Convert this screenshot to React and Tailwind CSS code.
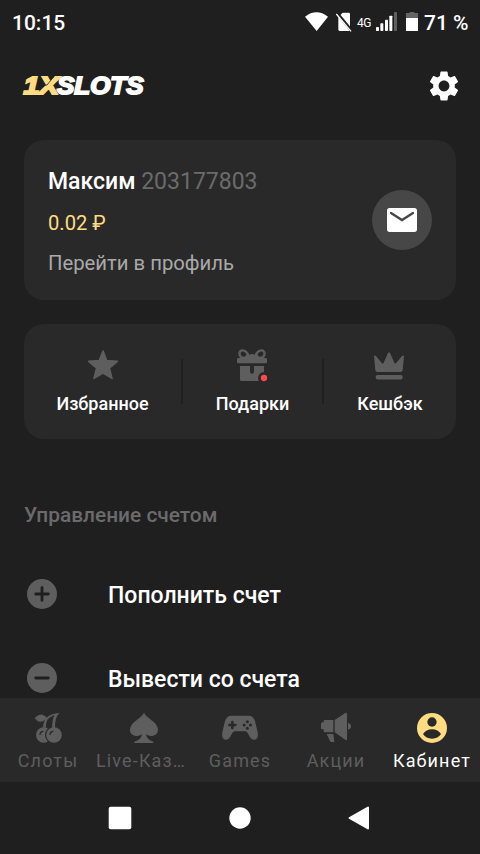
import React from "react";
import { MdSettings } from "react-icons/md";

const GREY = "#5e5e5e";
const PANEL = "#292929";

function StatusBar() {
  return (
    <div className="flex h-[46px] shrink-0 items-center justify-between pl-3 text-[21px] font-medium text-white">
      <span className="mt-0.5 whitespace-nowrap">10:15</span>
      <div className="flex w-[175px] items-center">
        <svg width="24" height="21" viewBox="45 33 72 63" className="mb-[3px] shrink-0">
          <path d="M45 50Q79 24 114 50L80 93Z" fill="#fff" />
        </svg>
        <svg width="18" height="21" viewBox="135 33 54 63" className="mb-[3px] ml-1.5 shrink-0">
          <path d="M145 52L157 39Q158 38 160 38H176Q180 38 180 42V88Q180 93 176 93H149Q145 93 145 88Z" fill="#fff" />
          <path d="M141 39L187 95" stroke="#1f1f1f" strokeWidth="9" />
          <path d="M139 42L183 94" stroke="#fff" strokeWidth="4" />
        </svg>
        <span className="ml-1 w-[14px] shrink-0 text-[12px] font-normal tracking-[-0.4px]">4G</span>
        <svg width="24" height="21" viewBox="255 33 72 63" className="mb-[3px] ml-1 shrink-0">
          <g fill="#fff">
            <rect x="258" y="81" width="9" height="12" rx="2" />
            <rect x="271" y="70" width="9" height="23" rx="2" />
            <rect x="285" y="59" width="9" height="34" rx="2" />
            <rect x="298" y="47" width="9" height="46" rx="2" />
            <rect x="312" y="36" width="9" height="57" rx="2" fill="#5f5f5f" />
          </g>
        </svg>
        <svg width="14" height="21" viewBox="345 33 42 63" className="mb-[3px] ml-1.5 shrink-0">
          <path d="M348 39H359V36H373V39H384V56H348Z" fill="#656565" />
          <rect x="348" y="54" width="36" height="39" fill="#fff" />
        </svg>
        <span className="mt-0.5 ml-[5px] whitespace-nowrap">71 %</span>
      </div>
    </div>
  );
}

function Logo() {
  return (
    <svg width="132" height="40" viewBox="18 66 132 40" fontFamily="'Liberation Sans', sans-serif" fontWeight="700" fontStyle="italic" fontSize="23.5">
      <text x="23.500" y="94.300" textLength="35" lengthAdjust="spacingAndGlyphs" fill="#ffdc82" stroke="#ffdc82" strokeWidth="1.9">1X</text>
      <path d="M38 86.500L47 85L53.500 77" stroke="#1f1f1f" strokeWidth="0.8" fill="none" />
      <text x="57" y="94.300" textLength="86.5" lengthAdjust="spacingAndGlyphs" fill="#fff" stroke="#fff" strokeWidth="1.8">SLOTS</text>
    </svg>
  );
}

function ProfileCard() {
  return (
    <section className="mx-6 mt-3.5 flex h-40 shrink-0 items-center justify-between rounded-[20px] bg-[#292929] px-6">
      <div className="mt-1 flex flex-col whitespace-nowrap">
        <div className="h-[42px] text-[23px] leading-[42px]">
          <span className="font-medium text-white">Максим</span>{" "}
          <span className="text-[#6b6b6b]">203177803</span>
        </div>
        <div className="h-10 text-[20.2px] leading-[40px] text-[#ffdc82]">0.02 ₽</div>
        <div className="h-10 text-[20.3px] leading-[40px] text-[#a9a9a9]">Перейти в профиль</div>
      </div>
      <svg width="60" height="60" viewBox="66 180 180 180">
        <circle cx="156" cy="270" r="90" fill="#474747" />
        <rect x="111" y="234" width="90" height="72" rx="8" fill="#fff" />
        <path d="M123 249L156 270L189 249" fill="none" stroke="#474747" strokeWidth="7" strokeLinecap="round" />
      </svg>
    </section>
  );
}

const Star = () => (
  <svg width="33" height="36" viewBox="198 81 99 108" fill={GREY} stroke={GREY} strokeWidth="5" strokeLinejoin="round">
    <path d="M249 93L260 122L292 124L268 144L276 175L249 159L222 175L230 144L206 124L238 122Z" />
  </svg>
);

const Gift = () => (
  <svg width="33" height="36" viewBox="18 81 99 108">
    <g fill="none" stroke={GREY} strokeWidth="7">
      <path d="M58 116C56 98 43 88 33 92C24 98 29 114 41 114C49 114 52 108 53 102" />
      <path d="M74 116C76 98 89 88 99 92C108 98 103 114 91 114C83 114 80 108 79 102" />
    </g>
    <rect x="21" y="114" width="90" height="16" rx="4" fill={GREY} />
    <path d="M55 116V107Q58 102 66 102Q74 102 77 107V116Z" fill={GREY} />
    <path d="M30 138H60V155Q60 161 66 161Q72 161 72 155V138H102V183H34Q30 183 30 179Z" fill={GREY} />
    <circle cx="102" cy="174" r="18" fill={PANEL} />
    <circle cx="102" cy="174" r="9.5" fill="#ff4949" />
  </svg>
);

const Crown = () => (
  <svg width="34" height="36" viewBox="429 81 102 108" fill={GREY}>
    <path d="M432 109Q433 104 438 108L456 130Q459 132 461 128L474 99Q477 94 480 99L493 128Q495 132 498 130L516 108Q521 104 522 109L518 151Q517 156 512 156H442Q437 156 436 151Z" />
    <rect x="437" y="165" width="81" height="13.5" rx="6" />
  </svg>
);

function Shortcut({ width, icon, label }) {
  return (
    <div className={`flex flex-col items-center pt-[23px] ${width}`}>
      {icon}
      <span className="mt-[11px] whitespace-nowrap text-[18px] leading-5 font-medium text-white">{label}</span>
    </div>
  );
}

const Divider = () => <div className="mt-[35px] h-[45px] w-0.5 bg-[#1f1f1f]" />;

function Shortcuts() {
  return (
    <section className="mx-6 mt-6 flex h-[115px] shrink-0 rounded-[20px] bg-[#292929]">
      <Shortcut width="w-[157px]" icon={<Star />} label="Избранное" />
      <Divider />
      <Shortcut width="w-[139px]" icon={<Gift />} label="Подарки" />
      <Divider />
      <Shortcut width="w-[132px]" icon={<Crown />} label="Кешбэк" />
    </section>
  );
}

function AccountRow({ label, plus }) {
  return (
    <div className="flex h-[84px] shrink-0 items-center pl-[27px]">
      <svg width="30" height="30" viewBox="0 0 30 30">
        <circle cx="15" cy="15" r="15" fill={GREY} />
        <path d={plus ? "M8.7 15H21.3M15 8.7V21.3" : "M8.7 15H21.3"} stroke="#1f1f1f" strokeWidth="2.8" strokeLinecap="round" />
      </svg>
      <span className="mt-1 ml-[51px] whitespace-nowrap text-[23px] leading-8 font-medium text-white">{label}</span>
    </div>
  );
}

const Cherries = () => (
  <svg width="30" height="32" viewBox="99 48 90 96">
    <path d="M104 69Q116 57 127 59Q136 61 141 69Q132 80 121 80Q111 80 104 69Z" fill={GREY} />
    <path d="M178 54Q152 55 139 69Q130 80 129 98H137Q137 84 143 73Q149 65 164 60Q156 72 157 98H165Q164 68 178 54Z" fill={GREY} />
    <circle cx="131" cy="120" r="23" fill={GREY} />
    <circle cx="162" cy="120" r="27" fill={PANEL} />
    <path d="M157 90H165V100H157Z" fill={GREY} />
    <circle cx="162" cy="120" r="23.5" fill={GREY} />
    <path d="M120 118Q121 110 129 109M150 118Q151 110 159 109" fill="none" stroke={PANEL} strokeWidth="4" strokeLinecap="round" />
  </svg>
);

const Spade = () => (
  <svg width="30" height="32" viewBox="387 48 90 96">
    <path d="M432 53C441 72 474 80 474 105C474 121 454 129 438 118Q441 136 460 140V144H403V140Q423 136 426 118C410 129 390 121 390 105C390 80 423 72 432 53Z" fill={GREY} />
  </svg>
);

const Gamepad = () => (
  <svg width="38" height="32" viewBox="93 48 114 96">
    <path d="M122 62H178Q190 63 195 78L203 112C207 132 195 138 185 132C176 125 174 109 165 109H135C126 109 124 125 115 132C105 138 93 132 97 112L105 78Q110 63 122 62Z" fill={GREY} />
    <path d="M127 81V99M118 90H136" stroke={PANEL} strokeWidth="8" strokeLinecap="round" />
    <g fill={PANEL}>
      <circle cx="172" cy="80.500" r="4.500" />
      <circle cx="172" cy="99.500" r="4.500" />
      <circle cx="162.500" cy="90" r="4.500" />
      <circle cx="181.500" cy="90" r="4.500" />
    </g>
  </svg>
);

const Megaphone = () => (
  <svg width="36" height="32" viewBox="384 48 108 96" fill={GREY}>
    <path d="M401 82V77Q401 75 404 75H430V112H404Q401 112 401 109V103H396Q393 103 393 99V87Q393 82 397 82Z" />
    <path d="M434 75L466 54Q471 51 471 57V132Q471 138 466 134L434 112Z" />
    <path d="M474 84Q483 86 483 94Q483 102 474 104Z" />
    <path d="M410 117H430L433 141H424Q421 141 420 138Z" />
  </svg>
);

const Account = () => (
  <svg width="32" height="32" viewBox="678 48 96 96">
    <circle cx="726" cy="99" r="45" fill="#ffdc82" />
    <circle cx="726" cy="81" r="14" fill={PANEL} />
    <path d="M699 117Q708 103 726 103Q744 103 753 117Q744 131 726 131Q708 131 699 117Z" fill={PANEL} />
  </svg>
);

function Tab({ icon, label, active, nudge = "" }) {
  return (
    <div className="flex w-24 flex-col items-center pt-[13px]">
      {icon}
      <span
        className={`mt-2 whitespace-nowrap text-[18px] leading-5 tracking-[1.15px] ${nudge} ${
          active ? "text-white" : "text-[#5e5e5e]"
        }`}
      >
        {label}
      </span>
    </div>
  );
}

export default function App() {
  return (
    <div className="flex h-[854px] w-[480px] flex-col overflow-hidden bg-[#1f1f1f] font-[Roboto,sans-serif]">
      <StatusBar />
      <main className="flex h-[652px] shrink-0 flex-col overflow-hidden">
        <header className="flex h-20 shrink-0 items-center justify-between pr-[18px] pl-[18px]">
          <Logo />
          <MdSettings size={36} color="#fff" />
        </header>
        <ProfileCard />
        <Shortcuts />
        <h2 className="mt-[60px] h-8 shrink-0 pl-6 text-[20.900px] leading-8 font-medium text-[#6b6b6b]">Управление счетом</h2>
        <div className="mt-[21px] flex flex-col">
          <AccountRow label="Пополнить счет" plus />
          <AccountRow label="Вывести со счета" />
        </div>
      </main>
      <nav className="flex h-[84px] shrink-0 bg-[#292929]">
        <Tab icon={<Cherries />} label="Слоты" />
        <Tab icon={<Spade />} label="Live-Каз…" nudge="mr-1.5" />
        <Tab icon={<Gamepad />} label="Games" />
        <Tab icon={<Megaphone />} label="Акции" />
        <Tab icon={<Account />} label="Кабинет" active />
      </nav>
      <footer className="flex h-[72px] shrink-0 items-center justify-between pr-[108px] pl-[108px]">
        <svg width="24" height="24" viewBox="0 0 24 24">
          <rect x="0.700" y="0.700" width="22.600" height="22.600" rx="2" fill="#fff" />
        </svg>
        <svg width="24" height="24" viewBox="0 0 24 24">
          <circle cx="12" cy="12" r="10.700" fill="#fff" />
        </svg>
        <svg width="24" height="24" viewBox="0 0 24 24">
          <path d="M1.500 12L20 1.500V22.500Z" fill="#fff" stroke="#fff" strokeWidth="2" strokeLinejoin="round" />
        </svg>
      </footer>
    </div>
  );
}
